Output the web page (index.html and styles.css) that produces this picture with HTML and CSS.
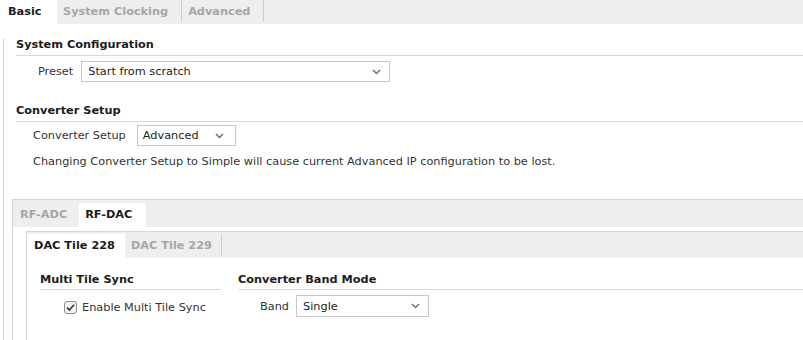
FILE: index.html
```html
<!doctype html>
<html lang="en">
<head>
    <meta charset="UTF-8">
    <title>RF Data Converter</title>
    <link rel="stylesheet" href="styles.css">
</head>
<body>
    <div class="tabs top-tabs">
        <div class="tab active">Basic</div>
        <div class="tab">System Clocking</div>
        <div class="tab">Advanced</div>
    </div>
    <div class="page">
        <div class="section">
            <div class="heading first">System Configuration</div>
            <div class="row preset-row">
                <span class="label preset-label">Preset</span>
                <div class="select preset-select">
                    <span>Start from scratch</span>
                    <svg class="chev" width="9" height="6" viewBox="0 0 9 6"><polyline points="1,1 4.5,4.5 8,1"/></svg>
                </div>
            </div>
            <div class="heading second">Converter Setup</div>
            <div class="row setup-row">
                <span class="label setup-label">Converter Setup</span>
                <div class="select setup-select">
                    <span>Advanced</span>
                    <svg class="chev" width="9" height="6" viewBox="0 0 9 6"><polyline points="1,1 4.5,4.5 8,1"/></svg>
                </div>
            </div>
            <p class="note">Changing Converter Setup to Simple will cause current Advanced IP configuration to be lost.</p>
        </div>

        <div class="panel outer">
            <div class="tabs sub-tabs outer-tabs">
                <div class="tab">RF-ADC</div>
                <div class="tab active">RF-DAC</div>
            </div>
            <div class="panel-body">
                <div class="panel inner">
                    <div class="tabs sub-tabs inner-tabs">
                        <div class="tab active">DAC Tile 228</div>
                        <div class="tab sep">DAC Tile 229</div>
                    </div>
                    <div class="columns">
                        <div class="col">
                            <div class="heading">Multi Tile Sync</div>
                            <label class="check">
                                <svg width="13" height="13" viewBox="0 0 13 13"><rect x="0.5" y="0.5" width="12" height="12" rx="2.5" fill="#f3f3f3" stroke="#8c8c8c"/><polyline points="3,6.6 5.4,9 10,3.8" fill="none" stroke="#3a3a3a" stroke-width="1.7"/></svg>
                                <span>Enable Multi Tile Sync</span>
                            </label>
                        </div>
                        <div class="col">
                            <div class="heading">Converter Band Mode</div>
                            <div class="row band-row">
                                <span class="label band-label">Band</span>
                                <div class="select band-select">
                                    <span>Single</span>
                                    <svg class="chev" width="9" height="6" viewBox="0 0 9 6"><polyline points="1,1 4.5,4.5 8,1"/></svg>
                                </div>
                            </div>
                        </div>
                    </div>
                </div>
            </div>
        </div>
    </div>
</body>
</html>
```

FILE: styles.css
```css
*{
    margin:0;
    padding:0;
    box-sizing:border-box;
}
body{
    width:803px;
    height:340px;
    overflow:hidden;
    font-family:"DejaVu Sans",sans-serif;
    font-size:11.3px;
    color:#333;
    background:#fff;
}
.tabs{
    display:flex;
    background:#eee;
}
.tab{
    font-weight:bold;
    color:#a6a6a6;
    white-space:nowrap;
}
.tab.active{
    background:#fff;
    color:#1c1c1c;
}
.top-tabs{
    height:24px;
}
.top-tabs .tab{
    height:22px;
    padding:2px 13px 0 6px;
    line-height:20px;
    border-right:1px solid #cfcfcf;
}
.top-tabs .tab.active{
    width:57px;
    height:24px;
    padding:0 0 0 8px;
    line-height:24px;
    border-right:0;
}
.page{
    margin-left:3px;
    border-left:1px solid #d6d6d6;
    height:316px;
}
.section{
    padding-left:12px;
}
.heading{
    font-weight:bold;
    color:#1c1c1c;
    line-height:14px;
    padding-bottom:3px;
    border-bottom:1px solid #d9d9d9;
}
.heading.first{
    margin-top:14px;
}
.heading.second{
    margin-top:22px;
}
.row{
    display:flex;
    align-items:center;
    padding-left:22px;
}
.label{
    color:#333;
    white-space:nowrap;
}
.preset-row{
    margin-top:5px;
}
.preset-label{
    margin-right:8px;
}
.setup-row{
    margin-top:3px;
    padding-left:17px;
}
.setup-label{
    margin-right:11px;
}
.select{
    display:flex;
    align-items:center;
    justify-content:space-between;
    height:21px;
    border:1px solid #c8c8c8;
    background:#fff;
    color:#222;
    padding:0 8px 0 6px;
}
.chev{
    fill:none;
    stroke:#707070;
    stroke-width:1.5;
}
.preset-select{
    width:309px;
}
.setup-select{
    width:99px;
    padding:0 11px 0 5px;
}
.note{
    margin-top:9px;
    padding-left:17px;
    line-height:14px;
    color:#333;
}
.panel{
    border-top:1px solid #d6d6d6;
    border-left:1px solid #d6d6d6;
}
.outer{
    margin:30px 0 0 8px;
    height:141px;
}
.outer-tabs{
    height:27px;
}
.outer-tabs .tab{
    margin-top:3px;
    height:24px;
    line-height:23px;
    padding:0 12px 0 7px;
}
.outer-tabs .tab.active{
    padding:0 14px 0 6px;
}
.panel-body{
    padding:4px 0 0 13px;
}
.inner{
    height:120px;
}
.inner-tabs{
    height:26px;
}
.inner-tabs .tab{
    margin-top:2px;
    height:24px;
    line-height:23px;
    padding:0 10px 0 7px;
}
.inner-tabs .tab.sep{
    height:22px;
    padding:0 9px 0 6px;
    border-right:1px solid #cfcfcf;
}
.columns{
    display:grid;
    grid-template-columns:181px 1fr;
    column-gap:17px;
    padding-left:13px;
}
.col .heading{
    margin-top:15px;
    padding-bottom:2px;
}
.check{
    display:flex;
    align-items:center;
    gap:5px;
    margin-top:11px;
    padding-left:24px;
    color:#333;
}
.check svg{
    flex:none;
}
.band-row{
    margin-top:5px;
}
.band-label{
    margin-right:7px;
}
.band-select{
    width:133px;
    height:22px;
}
```
